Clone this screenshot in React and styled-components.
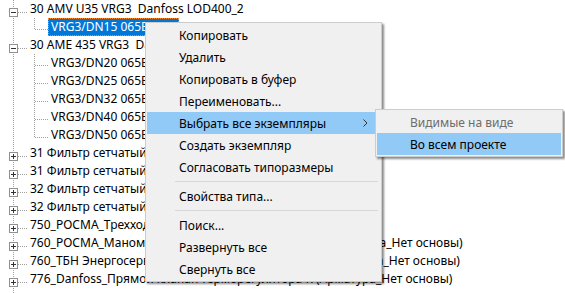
import React from "react";
import styled, { createGlobalStyle } from "styled-components";

const GlobalStyle = createGlobalStyle`
  html, body {
    margin: 0;
    padding: 0;
    background: #ffffff;
    overflow: hidden;
  }
  body {
    font-family: "Noto Sans", "Liberation Sans", sans-serif;
    font-size: 12px;
    color: #000000;
  }
`;

const dotV = "repeating-linear-gradient(to bottom, #a0a0a0 0 1px, transparent 1px 2px)";
const dotH = "repeating-linear-gradient(to right, #a0a0a0 0 1px, transparent 1px 2px)";

const Page = styled.div`
  position: relative;
  width: 565px;
  height: 293px;
  overflow: hidden;
`;

const TreeList = styled.div`
  display: flex;
  flex-direction: column;
  height: 100%;
`;

const Row = styled.div`
  display: flex;
  height: 18px;
  flex: none;
  white-space: pre;
`;

const Indent = styled.div`
  flex: none;
  width: 21px;
  background: ${(p) => (p.$line ? `${dotV} 13px 0 / 1px 100% no-repeat` : "none")};
`;

const TailLine = styled.div`
  flex: 1;
  background: ${dotV} 13px 0 / 1px 100% no-repeat;
`;

const Joint = styled.div`
  flex: none;
  width: 27px;
  display: flex;
  align-items: flex-start;
  padding: ${(p) => p.$boxTop}px 0 0 9px;
  box-sizing: border-box;
  background:
    ${dotV} 13px 0 / 1px ${(p) => (p.$last ? `${p.$mid}px` : "100%")} no-repeat,
    ${dotH} 14px ${(p) => p.$mid}px / 13px 1px no-repeat;
`;

const Label = styled.div`
  padding: 0 3px;
  line-height: 18px;
  height: 18px;
  box-sizing: border-box;
  color: ${(p) => (p.$selected ? "#ffffff" : "#000000")};
  background: ${(p) => (p.$selected ? "#0078d7" : "transparent")};
  outline: ${(p) => (p.$selected ? "1px dotted #ff8728" : "none")};
  outline-offset: -1px;
`;

const Menu = styled.div`
  position: absolute;
  left: ${(p) => p.$left}px;
  top: ${(p) => p.$top}px;
  width: ${(p) => p.$width}px;
  box-sizing: border-box;
  padding: 1px;
  background: #f0f0f0;
  border: 1px solid #cccccc;
  box-shadow: 2px 2px 2px rgba(0, 0, 0, 0.45);
  display: flex;
  flex-direction: column;
`;

const MenuItem = styled.div`
  height: 22px;
  display: flex;
  align-items: center;
  padding-left: ${(p) => p.$pad}px;
  padding-right: 12px;
  background: ${(p) => (p.$active ? "#91c9f7" : "transparent")};
  color: ${(p) => (p.$disabled ? "#6d6d6d" : "#000000")};
  white-space: nowrap;
`;

const ItemText = styled.span`
  flex: 1;
`;

const Separator = styled.div`
  height: 7px;
  display: flex;
  align-items: center;
  padding: 0 2px 0 28px;
  &::before {
    content: "";
    flex: 1;
    height: 1px;
    background: #d7d7d7;
  }
`;

const ExpandBox = ({ open }) => (
  <svg width="9" height="9" viewBox="0 0 9 9">
    <rect x="0.5" y="0.5" width="8" height="8" fill="#ffffff" stroke="#919191" />
    <path d="M2 4.5h5" stroke="#333333" />
    {!open && <path d="M4.5 2v5" stroke="#333333" />}
  </svg>
);

const Chevron = () => (
  <svg width="5" height="8" viewBox="0 0 5 8">
    <path d="M0.5 0.5l3.5 3.5l-3.5 3.5" fill="none" stroke="#333333" />
  </svg>
);

const rows = [
  { level: 0, text: "30 AMV U35 VRG3  Danfoss LOD400_2", open: true },
  { level: 1, text: "VRG3/DN15 065B2388", last: true, selected: true },
  { level: 0, text: "30 AME 435 VRG3  Danfoss LOD400_3", open: true },
  { level: 1, text: "VRG3/DN20 065B2389" },
  { level: 1, text: "VRG3/DN25 065B2390" },
  { level: 1, text: "VRG3/DN32 065B2391" },
  { level: 1, text: "VRG3/DN40 065B2392" },
  { level: 1, text: "VRG3/DN50 065B2393", last: true },
  { level: 0, text: "31 Фильтр сетчатый фланцевый FVF", open: false },
  { level: 0, text: "31 Фильтр сетчатый муфтовый Y222", open: false },
  { level: 0, text: "32 Фильтр сетчатый фланцевый FVF", open: false },
  { level: 0, text: "32 Фильтр сетчатый муфтовый Y222", open: false },
  { level: 0, text: "750_РОСМА_Трехходовой кран", open: false },
  { level: 0, text: "760_РОСМА_Манометр показывающий МП4-У1-160 (Система_Нет основы)", open: false },
  { level: 0, text: "760_ТБН Энергосервис_Расходомер КМ-5-1Б1 Ду50 (Система_Нет основы)", open: false },
  { level: 0, text: "776_Danfoss_Прямой клапан терморегулятора R (Арматура_Нет основы)", open: false },
];

const menuItems = [
  { text: "Копировать" },
  { text: "Удалить" },
  { text: "Копировать в буфер" },
  { text: "Переименовать..." },
  { text: "Выбрать все экземпляры", active: true, sub: true },
  { text: "Создать экземпляр" },
  { text: "Согласовать типоразмеры" },
  { sep: true },
  { text: "Свойства типа..." },
  { sep: true },
  { text: "Поиск..." },
  { text: "Развернуть все" },
  { text: "Свернуть все" },
];

const TreeRow = ({ row }) => {
  const isChild = row.level === 1;
  return (
    <Row>
      {isChild && <Indent $line />}
      <Joint $last={row.last} $mid={isChild ? 11 : 12} $boxTop={8}>
        {!isChild && <ExpandBox open={row.open} />}
      </Joint>
      <Label $selected={row.selected}>{row.text}</Label>
    </Row>
  );
};

export default function App() {
  return (
    <Page>
      <GlobalStyle />
      <TreeList>
        {rows.map((row, i) => (
          <TreeRow key={i} row={row} />
        ))}
        <TailLine />
      </TreeList>

      <Menu $left={145} $top={22} $width={237}>
        {menuItems.map((item, i) =>
          item.sep ? (
            <Separator key={i} />
          ) : (
            <MenuItem key={i} $pad={32} $active={item.active}>
              <ItemText>{item.text}</ItemText>
              {item.sub && <Chevron />}
            </MenuItem>
          )
        )}
      </Menu>

      <Menu $left={375} $top={109} $width={188}>
        <MenuItem $pad={33} $disabled>
          <ItemText>Видимые на виде</ItemText>
        </MenuItem>
        <MenuItem $pad={33} $active>
          <ItemText>Во всем проекте</ItemText>
        </MenuItem>
      </Menu>
    </Page>
  );
}
